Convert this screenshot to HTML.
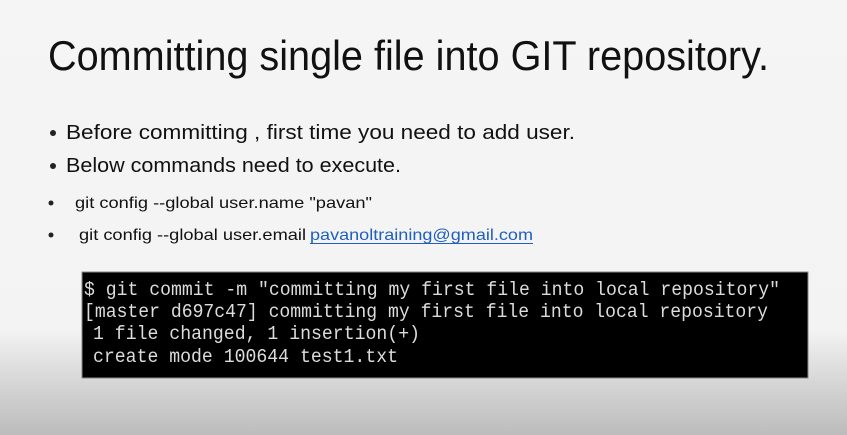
<!DOCTYPE html>
<html><head><style>
html,body{margin:0;padding:0}
body{width:847px;height:435px;overflow:hidden;background:linear-gradient(to bottom,#f5f5f5 0,#f3f3f3 330px,#d2d2d2 390px,#bcbcbc 435px);position:relative}
svg{position:absolute;left:0;top:0}
</style></head><body>
<svg width="847" height="435" xmlns="http://www.w3.org/2000/svg">
<g font-family="Liberation Sans, sans-serif" fill="#111">
<text x="48" y="70" font-size="42" textLength="721" lengthAdjust="spacingAndGlyphs">Committing single file into GIT repository.</text>
<circle cx="53" cy="133" r="3" fill="#222"/>
<text x="66" y="139" font-size="20" textLength="509" lengthAdjust="spacingAndGlyphs">Before committing , first time you need to add user.</text>
<circle cx="53" cy="166" r="3" fill="#222"/>
<text x="66" y="172" font-size="20" textLength="335" lengthAdjust="spacingAndGlyphs">Below commands need to execute.</text>
<circle cx="51" cy="203" r="2.5" fill="#222"/>
<text x="75" y="208" font-size="16" textLength="297" lengthAdjust="spacingAndGlyphs">git config --global user.name "pavan"</text>
<circle cx="51" cy="235" r="2.5" fill="#222"/>
<text x="79" y="240" font-size="16" textLength="227" lengthAdjust="spacingAndGlyphs">git config --global user.email</text>
<text x="310" y="240" font-size="16" fill="#1f5fbf" textLength="223" lengthAdjust="spacingAndGlyphs">pavanoltraining@gmail.com</text>
<rect x="310" y="243" width="223" height="1" fill="#1f5fbf"/>
</g>
<rect x="82" y="272" width="726" height="106" fill="#000" stroke="#888" stroke-width="1"/>
<g font-family="Liberation Mono, monospace" font-size="19" fill="#dcdcdc">
<text x="84" y="295" textLength="696" lengthAdjust="spacingAndGlyphs">$ git commit -m "committing my first file into local repository"</text>
<text x="84" y="317" textLength="684" lengthAdjust="spacingAndGlyphs">[master d697c47] committing my first file into local repository</text>
<text x="93" y="339" textLength="327" lengthAdjust="spacingAndGlyphs">1 file changed, 1 insertion(+)</text>
<text x="93" y="362" textLength="305" lengthAdjust="spacingAndGlyphs">create mode 100644 test1.txt</text>
</g>
</svg>
</body></html>
